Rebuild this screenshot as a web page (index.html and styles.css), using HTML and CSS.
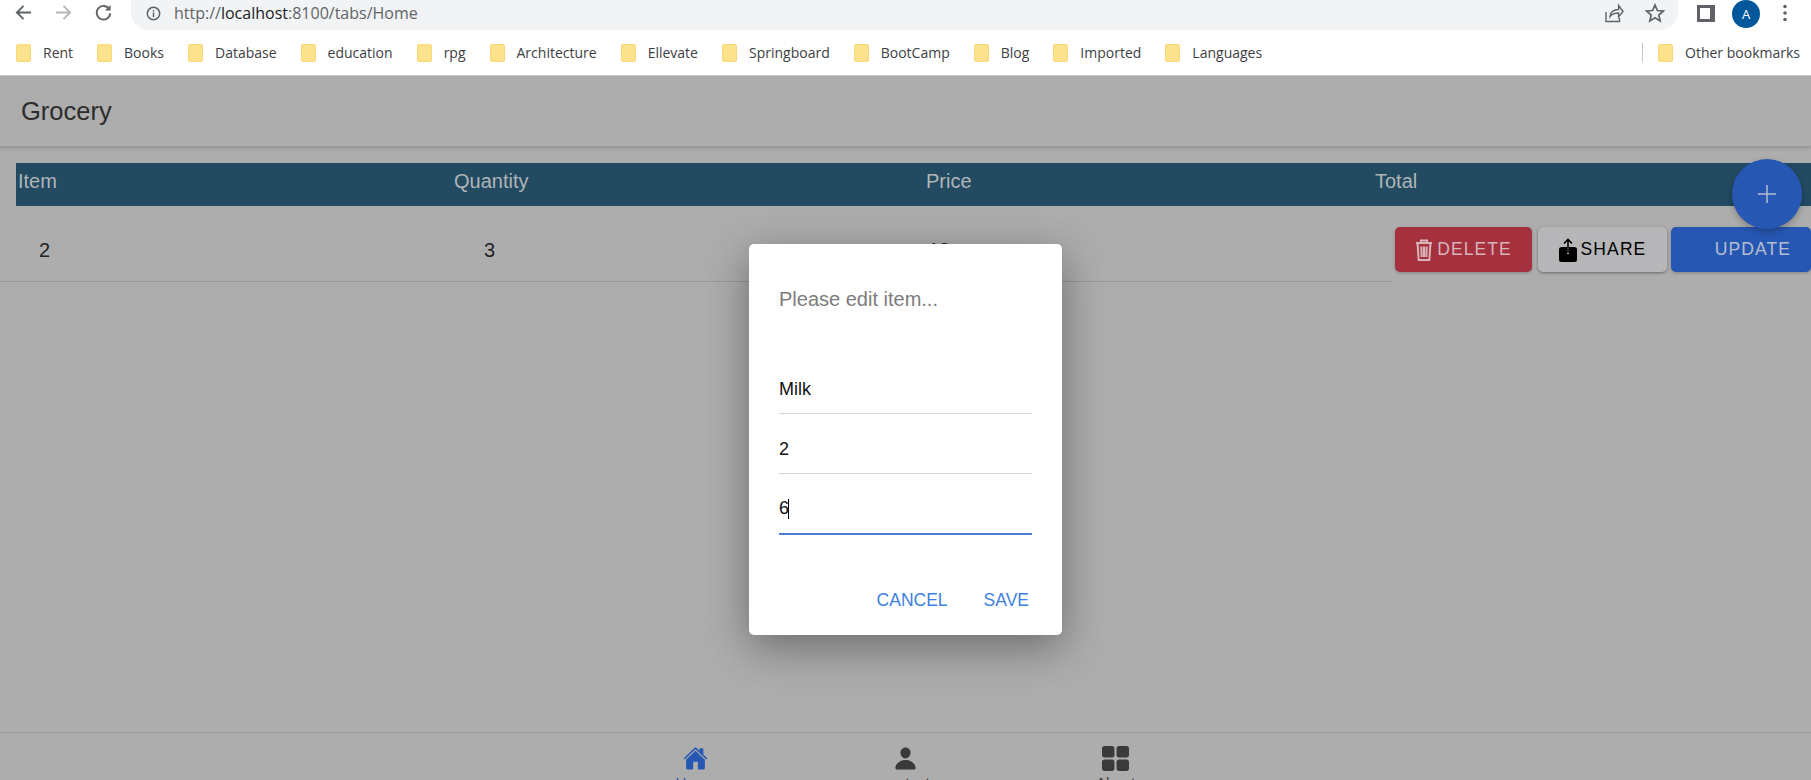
FILE: index.html
```html
<!DOCTYPE html>
<html lang="en">
<head>
  <meta charset="UTF-8">
  <title>Grocery</title>
  <link rel="stylesheet" href="styles.css">
</head>
<body>

<div class="browser-bar">
  <div class="nav-icons">
    <svg class="nav-icon" viewBox="0 0 18 18"><path d="M17 9H2M9 2 2 9l7 7" fill="none" stroke="#5f6368" stroke-width="2"/></svg>
    <svg class="nav-icon" viewBox="0 0 18 18"><path d="M1 9h15M9 2l7 7-7 7" fill="none" stroke="#b4b6b9" stroke-width="2"/></svg>
    <svg class="nav-icon" viewBox="0 0 18 18"><path d="M15 5.2A7.2 7.2 0 1 0 16.2 10" fill="none" stroke="#5f6368" stroke-width="2"/><path d="M16.5 1v6h-6z" fill="#5f6368"/></svg>
  </div>
  <div class="address">
    <svg class="info-icon" viewBox="0 0 16 16"><circle cx="8" cy="8" r="6.6" fill="none" stroke="#5f6368" stroke-width="1.6"/><path d="M7.2 7h1.6v4.6H7.2zM7.2 4.2h1.6v1.6H7.2z" fill="#5f6368"/></svg>
    <span class="url"><span class="url-dim">http://</span>localhost<span class="url-dim">:8100/tabs/Home</span></span>
    <svg class="share-page" viewBox="0 0 20 20"><path d="M2 9v9.5h13.5V15M6 13.5c.6-4.6 4-7 8.600-7V2.500l4.400 6-4.400 5.500V10c-3.800 0-6.600.8-8.600 3.500z" fill="none" stroke="#5f6368" stroke-width="1.400"/></svg>
    <svg class="star" viewBox="0 0 20 20"><path d="m10 2 2.400 5.500 6 .5-4.600 4 1.400 5.900L10 14.800l-5.200 3.100 1.400-5.900-4.600-4 6-.5z" fill="none" stroke="#5f6368" stroke-width="1.700"/></svg>
  </div>
  <div class="side-panel"><div class="side-panel-gap"></div></div>
  <div class="avatar">A</div>
  <svg class="dots" viewBox="0 0 6 20"><circle cx="3" cy="3.500" r="1.800"/><circle cx="3" cy="10" r="1.800"/><circle cx="3" cy="16.500" r="1.800"/></svg>
</div>

<div class="bookmarks">
  <div class="bookmark"><span class="folder"></span>Rent</div>
  <div class="bookmark"><span class="folder"></span>Books</div>
  <div class="bookmark"><span class="folder"></span>Database</div>
  <div class="bookmark"><span class="folder"></span>education</div>
  <div class="bookmark"><span class="folder"></span>rpg</div>
  <div class="bookmark"><span class="folder"></span>Architecture</div>
  <div class="bookmark"><span class="folder"></span>Ellevate</div>
  <div class="bookmark"><span class="folder"></span>Springboard</div>
  <div class="bookmark"><span class="folder"></span>BootCamp</div>
  <div class="bookmark"><span class="folder"></span>Blog</div>
  <div class="bookmark"><span class="folder"></span>Imported</div>
  <div class="bookmark"><span class="folder"></span>Languages</div>
  <div class="bookmark other"><span class="folder"></span>Other bookmarks</div>
</div>

<div class="app">
  <div class="toolbar">Grocery</div>

  <div class="content">
    <div class="table-head">
      <div class="col-item">Item</div>
      <div class="col-quantity">Quantity</div>
      <div class="col-price">Price</div>
      <div>Total</div>
    </div>

    <div class="table-row">
      <div class="row-cells">
        <div class="cell-item">2</div>
        <div class="cell-quantity">3</div>
        <div class="cell-price">18</div>
      </div>
      <div class="row-actions">
        <button class="btn btn-delete">
          <svg class="btn-icon" viewBox="0 0 18 24"><path d="M1 5h16M6 5V2.500h6V5M2.500 5l1.200 17h10.600l1.200-17M6.300 8.500l.4 10.500M9 8.500V19M11.700 8.500l-.4 10.500" fill="none" stroke="#d9b5ba" stroke-width="2"/></svg>
          DELETE
        </button>
        <button class="btn btn-share">
          <svg class="btn-icon" viewBox="0 0 18 24"><path d="M2.500 9H8v7h2V9h5.500A2.500 2.500 0 0 1 18 11.500v10a2.500 2.500 0 0 1-2.500 2.500h-13A2.500 2.500 0 0 1 0 21.500v-10A2.500 2.500 0 0 1 2.500 9z"/><path d="M9 15V1.500M5 5.500l4-4 4 4" fill="none" stroke="#000" stroke-width="1.600"/></svg>
          SHARE
        </button>
        <button class="btn btn-update">UPDATE</button>
      </div>
    </div>
  </div>

  <div class="tabbar">
    <div class="tab tab-active">
      <svg class="tab-icon" viewBox="0 0 512 512"><path d="M261.560 101.280a8 8 0 00-11.060 0L66.400 277.150a8 8 0 00-2.470 5.790L63.900 448a32 32 0 0032 32H192a16 16 0 0016-16V328a8 8 0 018-8h80a8 8 0 018 8v136a16 16 0 0016 16h96.060a32 32 0 0032-32V282.940a8 8 0 00-2.470-5.790z"/><path d="M490.910 244.150l-74.800-71.560V64a16 16 0 00-16-16h-48a16 16 0 00-16 16v32l-57.920-55.380C272.770 35.140 264.710 32 256 32c-8.680 0-16.720 3.140-22.140 8.630l-212.700 203.500c-6.220 6-7 15.870-1.340 22.370A16 16 0 0043 267.560L250.500 69.280a8 8 0 0111.060 0l207.520 198.280a16 16 0 0022.590-.44c6.140-6.360 5.630-16.860-.76-22.970z"/></svg>
      <span>Home</span>
    </div>
    <div class="tab">
      <svg class="tab-icon" viewBox="0 0 512 512"><path d="M332.640 64.580C313.180 43.570 286 32 256 32c-30.160 0-57.430 11.500-76.800 32.380-19.580 21.110-29.120 49.800-26.880 80.780C156.760 206.280 203.270 256 256 256s99.160-49.710 103.670-110.820c2.270-30.700-7.330-59.330-27.030-80.600z"/><path d="M432 480H80a31 31 0 01-24.200-11.130c-6.500-7.770-9.120-18.380-7.180-29.110C57.060 392.940 83.400 353.610 124.800 326c36.780-24.510 83.370-38 131.200-38s94.420 13.500 131.200 38c41.400 27.600 67.740 66.930 76.180 113.750 1.940 10.730-.68 21.340-7.180 29.110A31 31 0 01432 480z"/></svg>
      <span>contact</span>
    </div>
    <div class="tab">
      <svg class="tab-icon" viewBox="0 0 26 24"><rect x="0" y="0" width="12" height="11" rx="2.500"/><rect x="14" y="0" width="12" height="11" rx="2.500"/><rect x="0" y="13" width="12" height="11" rx="2.500"/><rect x="14" y="13" width="12" height="11" rx="2.500"/></svg>
      <span>About</span>
    </div>
  </div>

  <div class="fab">
    <svg viewBox="0 0 18 18"><path d="M9 0v18M0 9h18" stroke="#b5bdd0" stroke-width="1.500"/></svg>
  </div>

  <div class="dialog">
    <div class="dialog-title">Please edit item...</div>
    <div class="field">Milk</div>
    <div class="field">2</div>
    <div class="field field-focus">6<span class="caret"></span></div>
    <div class="dialog-actions">
      <span>CANCEL</span>
      <span>SAVE</span>
    </div>
  </div>
</div>

</body>
</html>
```

FILE: styles.css
```css
html,
body {
  height: 100%;
  margin: 0;
  overflow: hidden;
}

body {
  display: flex;
  flex-direction: column;
  background: #fff;
  font-family: 'Liberation Sans', Arial, sans-serif;
}

/* browser chrome */
.browser-bar {
  display: flex;
  align-items: center;
  height: 30px;
  flex: none;
}

.nav-icons {
  display: flex;
  gap: 23px;
  width: 131px;
  margin-bottom: 6px;
  padding-left: 15px;
  box-sizing: border-box;
}

.nav-icon {
  width: 17px;
  height: 17px;
}

.address {
  display: flex;
  align-items: center;
  width: 1547px;
  height: 30px;
  padding-bottom: 4px;
  box-sizing: border-box;
  background: #f1f3f4;
  border-radius: 0 0 18px 18px;
  font-family: 'Open Sans', sans-serif;
  font-size: 16px;
}

.info-icon {
  width: 15px;
  height: 15px;
  margin-left: 15px;
  margin-right: 13px;
}

.url {
  flex: 1;
  color: #202124;
}

.url-dim {
  color: #5f6368;
}

.share-page {
  width: 20px;
  height: 20px;
  margin-right: 21px;
}

.star {
  width: 20px;
  height: 20px;
  margin-right: 13px;
}

.side-panel {
  display: flex;
  justify-content: flex-end;
  width: 18px;
  height: 17px;
  margin-left: 19px;
  margin-bottom: 4px;
  background: #5f6368;
}

.side-panel-gap {
  width: 10px;
  height: 11px;
  margin: 3px 5px 0 0;
  background: #fff;
}

.avatar {
  width: 28px;
  height: 28px;
  margin-left: 17px;
  margin-bottom: 3px;
  border-radius: 50%;
  background: #01579b;
  color: #fff;
  font-family: 'Open Sans', sans-serif;
  font-size: 13px;
  line-height: 28px;
  text-align: center;
}

.dots {
  width: 6px;
  height: 20px;
  margin-left: 22px;
  margin-bottom: 4px;
  fill: #5f6368;
}

.bookmarks {
  display: flex;
  align-items: center;
  gap: 24px;
  flex: none;
  height: 45px;
  padding-left: 16px;
  border-bottom: 1px solid #c8c8c8;
  font-family: 'Open Sans', sans-serif;
  font-size: 14px;
  color: #3c4043;
}

.bookmark {
  display: flex;
  align-items: center;
  gap: 12px;
}

.folder {
  width: 15px;
  height: 18px;
  background: #fde28c;
  border: 1px solid #f8d775;
  border-radius: 2px;
  box-sizing: border-box;
}

.other {
  margin-left: auto;
  margin-right: 11px;
  padding-left: 15px;
  border-left: 1px solid #c8c8c8;
}

/* app */
.app {
  position: relative;
  display: flex;
  flex-direction: column;
  flex: 1;
  min-height: 0;
  background: #adadad;
}

.toolbar {
  flex: none;
  height: 70px;
  padding-left: 21px;
  border-bottom: 1px solid #999;
  box-shadow: 0 2px 3px rgba(0, 0, 0, 0.12);
  font-size: 25.500px;
  line-height: 70px;
  color: #2c2c2c;
}

.content {
  flex: 1;
  padding-top: 16px;
  min-height: 0;
}

.table-head {
  display: flex;
  height: 43px;
  margin-left: 16px;
  padding-left: 2px;
  background: #224a61;
  color: #b0b5b8;
  font-size: 20px;
  line-height: 36px;
}

.col-item {
  width: 436px;
}

.col-quantity {
  width: 472px;
}

.col-price {
  width: 449px;
}

.table-row {
  display: flex;
}

.row-cells {
  display: flex;
  align-items: center;
  width: 1393px;
  height: 76px;
  padding-top: 14px;
  box-sizing: border-box;
  border-bottom: 1px solid #969696;
  font-size: 20px;
  color: #222;
}

.cell-item {
  width: 484px;
  padding-left: 39px;
  box-sizing: border-box;
}

.cell-quantity {
  width: 444px;
}

.row-actions {
  display: flex;
  gap: 4px;
  flex: 1;
  height: 45px;
  margin: 21px 0 0 2px;
}

.btn {
  display: flex;
  align-items: center;
  justify-content: center;
  gap: 4px;
  height: 45px;
  padding: 0;
  border: 0;
  border-radius: 5px;
  font-family: 'Liberation Sans', Arial, sans-serif;
  font-size: 17.500px;
  letter-spacing: 1.100px;
  box-shadow: 0 1px 3px rgba(0, 0, 0, 0.25);
}

.btn-icon {
  width: 18px;
  height: 24px;
}

.btn-delete {
  width: 137px;
  margin-right: 2px;
  background: #a5303e;
  color: #d6b4b9;
}

.btn-share {
  width: 129px;
  background: #b6b6b8;
  color: #000;
  box-shadow: 0 1px 3px rgba(0, 0, 0, 0.4);
}

.btn-update {
  flex: 1;
  padding-left: 24px;
  background: #2657b3;
  color: #b5bdd0;
}

.tabbar {
  display: flex;
  justify-content: center;
  flex: none;
  height: 48px;
  box-sizing: border-box;
  overflow: hidden;
  border-top: 1px solid #979797;
  font-size: 15px;
  color: #3a3a3a;
}

.tab {
  display: flex;
  flex-direction: column;
  align-items: center;
  width: 210px;
  padding-top: 13px;
  box-sizing: border-box;
  flex: none;
}

.tab-active {
  color: #2657b3;
}

.tab-icon {
  flex: none;
  width: 27px;
  height: 25px;
  margin-bottom: 3px;
  fill: currentColor;
}

.fab {
  position: absolute;
  top: 83px;
  right: 9px;
  display: flex;
  align-items: center;
  justify-content: center;
  width: 70px;
  height: 70px;
  border-radius: 50%;
  background: #2657b3;
  box-shadow: 0 3px 6px rgba(0, 0, 0, 0.25);
}

.fab svg {
  width: 18px;
  height: 18px;
}

/* edit dialog */
.dialog {
  position: absolute;
  top: 168px;
  left: 749px;
  width: 313px;
  height: 391px;
  padding: 0 30px;
  box-sizing: border-box;
  background: #fff;
  border-radius: 5px;
  box-shadow: 0 12px 44px rgba(0, 0, 0, 0.38);
}

.dialog-title {
  height: 110px;
  padding-top: 43px;
  box-sizing: border-box;
  color: #7c7c7c;
  font-size: 20px;
  line-height: 24px;
}

.field {
  display: flex;
  align-items: flex-end;
  height: 60px;
  padding-bottom: 13px;
  box-sizing: border-box;
  border-bottom: 1px solid #d5d5d5;
  color: #111;
  font-size: 18px;
  line-height: 22px;
}

.field-focus {
  height: 61px;
  padding-bottom: 14px;
  border-bottom: 2px solid #4a7ccf;
}

.caret {
  width: 1px;
  height: 20px;
  margin-left: -1px;
  background: #000;
}

.dialog-actions {
  display: flex;
  justify-content: flex-end;
  gap: 36px;
  padding: 54px 3px 0 0;
  color: #3f7fe0;
  font-size: 17.500px;
  line-height: 22px;
}
```
